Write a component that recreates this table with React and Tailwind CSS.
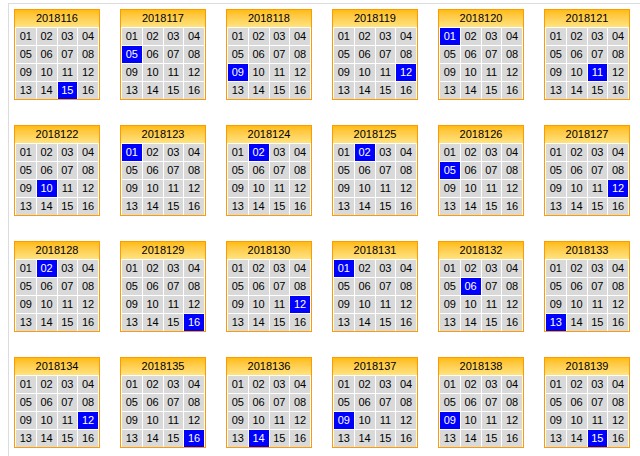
const draws = [
  ['2018116', 15], ['2018117', 5], ['2018118', 9], ['2018119', 12], ['2018120', 1], ['2018121', 11],
  ['2018122', 10], ['2018123', 1], ['2018124', 2], ['2018125', 2], ['2018126', 5], ['2018127', 12],
  ['2018128', 2], ['2018129', 16], ['2018130', 12], ['2018131', 1], ['2018132', 6], ['2018133', 13],
  ['2018134', 12], ['2018135', 16], ['2018136', 14], ['2018137', 9], ['2018138', 9], ['2018139', 15],
];

const nums = Array.from({ length: 16 }, (_, i) => i + 1);

function DrawCard({ issue, hit }) {
  return (
    <div className="w-[86px] border border-[#ff9a00] bg-white">
      <div className="h-[17px] flex items-center justify-center bg-gradient-to-b from-[#ffbc00] to-[#ffe37d] text-[11px] text-black leading-none">
        {issue}
      </div>
      <div className="grid grid-cols-4 gap-px pt-px px-px">
        {nums.map((n) => (
          <div
            key={n}
            className={
              n === hit
                ? 'h-[17px] flex items-center justify-center bg-[#0000ff] text-white text-[11px] leading-none'
                : 'h-[17px] flex items-center justify-center bg-[#d9d9d9] text-black text-[11px] leading-none'
            }
          >
            {String(n).padStart(2, '0')}
          </div>
        ))}
      </div>
    </div>
  );
}

export default function App() {
  return (
    <div className="w-[640px] h-[456px] bg-white overflow-hidden pt-[3px] pl-[8px]" style={{ fontFamily: '"Liberation Sans", Arial, sans-serif' }}>
      <div className="h-[460px] border-t border-l border-[#dcdcdc] pt-[5px] pl-[5px]">
        <div className="grid grid-cols-[repeat(6,86px)] gap-x-[20px] gap-y-[25px]">
          {draws.map(([issue, hit]) => (
            <DrawCard key={issue} issue={issue} hit={hit} />
          ))}
        </div>
      </div>
    </div>
  );
}
